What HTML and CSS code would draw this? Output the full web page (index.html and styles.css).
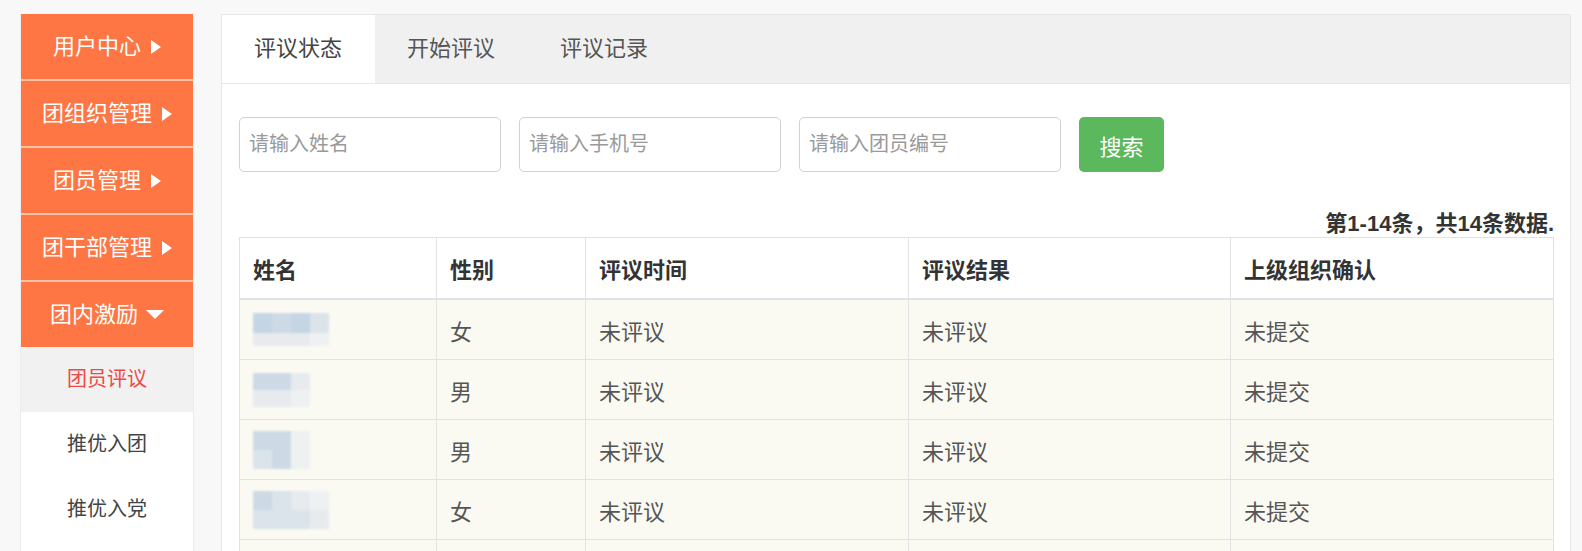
FILE: index.html
```html
<!DOCTYPE html>
<html lang="zh-CN">
<head>
    <meta charset="UTF-8">
    <meta name="viewport" content="width=device-width, initial-scale=1.0">
    <title>团员评议</title>
    <link rel="stylesheet" href="styles.css">
</head>
<body>

<div class="page">
    <!-- left menu -->
    <div class="sidebar">
        <ul class="menu">
            <li class="menu-item"><a href="#">用户中心<span class="arrow-right"></span></a></li>
            <li class="menu-item"><a href="#">团组织管理<span class="arrow-right"></span></a></li>
            <li class="menu-item"><a href="#">团员管理<span class="arrow-right"></span></a></li>
            <li class="menu-item"><a href="#">团干部管理<span class="arrow-right"></span></a></li>
            <li class="menu-item open"><a href="#">团内激励<span class="arrow-down"></span></a></li>
        </ul>
        <ul class="submenu">
            <li class="active"><a href="#">团员评议</a></li>
            <li><a href="#">推优入团</a></li>
            <li><a href="#">推优入党</a></li>
        </ul>
    </div>

    <!-- main panel -->
    <div class="panel">
        <ul class="tabs">
            <li class="active"><a href="#">评议状态</a></li>
            <li><a href="#">开始评议</a></li>
            <li><a href="#">评议记录</a></li>
        </ul>

        <div class="panel-body">
            <form class="search-form">
                <input type="text" placeholder="请输入姓名">
                <input type="text" placeholder="请输入手机号">
                <input type="text" placeholder="请输入团员编号">
                <button type="button" class="btn-search">搜索</button>
            </form>

            <div class="summary">第<b>1-14</b>条，共<b>14</b>条数据.</div>

            <table class="grid">
                <thead>
                    <tr>
                        <th>姓名</th>
                        <th>性别</th>
                        <th>评议时间</th>
                        <th>评议结果</th>
                        <th>上级组织确认</th>
                    </tr>
                </thead>
                <tbody>
                    <tr>
                        <td>
                            <div class="mosaic cols4 tall1">
                                <span class="m1"></span><span class="m2"></span><span class="m1"></span><span class="m3"></span>
                                <span class="m4"></span><span class="m4"></span><span class="m4"></span><span class="m5"></span>
                            </div>
                        </td>
                        <td>女</td>
                        <td>未评议</td>
                        <td>未评议</td>
                        <td>未提交</td>
                    </tr>
                    <tr>
                        <td>
                            <div class="mosaic cols3">
                                <span class="m2"></span><span class="m2"></span><span class="m4"></span>
                                <span class="m4"></span><span class="m4"></span><span class="m5"></span>
                            </div>
                        </td>
                        <td>男</td>
                        <td>未评议</td>
                        <td>未评议</td>
                        <td>未提交</td>
                    </tr>
                    <tr>
                        <td>
                            <div class="mosaic cols3 tall">
                                <span class="m2"></span><span class="m2"></span><span class="m5"></span>
                                <span class="m3"></span><span class="m2"></span><span class="m5"></span>
                            </div>
                        </td>
                        <td>男</td>
                        <td>未评议</td>
                        <td>未评议</td>
                        <td>未提交</td>
                    </tr>
                    <tr>
                        <td>
                            <div class="mosaic cols4 tall">
                                <span class="m2"></span><span class="m3"></span><span class="m4"></span><span class="m5"></span>
                                <span class="m3"></span><span class="m3"></span><span class="m3"></span><span class="m4"></span>
                            </div>
                        </td>
                        <td>女</td>
                        <td>未评议</td>
                        <td>未评议</td>
                        <td>未提交</td>
                    </tr>
                    <tr>
                        <td></td>
                        <td></td>
                        <td></td>
                        <td></td>
                        <td></td>
                    </tr>
                </tbody>
            </table>
        </div>
    </div>
</div>

</body>
</html>
```

FILE: styles.css
```css
html, body {
    margin: 0;
    padding: 0;
    overflow: hidden;
}
body {
    font-family: "Liberation Sans", "Noto Sans CJK SC", sans-serif;
    font-size: 22px;
    color: #333;
    background-color: #f8f8f8;
}
ul {
    list-style: none;
    margin: 0;
    padding: 0;
}
a {
    text-decoration: none;
    color: inherit;
}

.page {
    display: flex;
    align-items: flex-start;
    gap: 27px;
    padding: 14px 11px 0 20px;
}

/* ---- sidebar ---- */
.sidebar {
    width: 172px;
    flex-shrink: 0;
    height: 620px;
    background-color: #fff;
    border: 1px solid #ececec;
    border-top: 0;
}
.menu-item {
    background-color: #fd7643;
    border-bottom: 2px solid #fcc2a8;
}
.menu-item:last-child {
    border-bottom: 0;
}
.menu-item a {
    display: flex;
    align-items: center;
    justify-content: center;
    height: 65px;
    color: #fff;
    line-height: 30px;
}
.arrow-right {
    display: inline-block;
    width: 0;
    height: 0;
    margin-left: 10px;
    border-top: 7px solid transparent;
    border-bottom: 7px solid transparent;
    border-left: 10px solid #fff;
}
.arrow-down {
    display: inline-block;
    width: 0;
    height: 0;
    margin-left: 8px;
    border-left: 9px solid transparent;
    border-right: 9px solid transparent;
    border-top: 9px solid #fff;
}
.submenu li a {
    display: block;
    height: 65px;
    line-height: 65px;
    text-align: center;
    font-size: 20px;
    color: #444;
}
.submenu li.active a {
    background-color: #f1f1f1;
    color: #ee4a45;
}

/* ---- main panel ---- */
.panel {
    flex: 1;
    height: 640px;
    background-color: #fff;
    border: 1px solid #e6e6e6;
}
.tabs {
    display: flex;
    height: 68px;
    background-color: #f0f0f0;
    border-bottom: 1px solid #e8e8e8;
}
.tabs li a {
    display: block;
    padding: 0 33px 0 32px;
    line-height: 68px;
    color: #555;
}
.tabs li.active a {
    background-color: #fff;
    color: #444;
}

.panel-body {
    padding: 33px 16px 0 17px;
}
.search-form {
    display: flex;
    gap: 18px;
}
.search-form input {
    width: 262px;
    height: 55px;
    box-sizing: border-box;
    padding: 0 9px;
    border: 1px solid #d2d2d2;
    border-radius: 5px;
    font-family: inherit;
    font-size: 20px;
    color: #333;
}
.search-form input::placeholder {
    color: #9a9a9a;
}
.btn-search {
    width: 85px;
    height: 55px;
    border: 0;
    border-radius: 5px;
    background-color: #5cb85c;
    color: #fff;
    font-family: inherit;
    font-size: 22px;
    cursor: pointer;
}

.summary {
    margin-top: 38px;
    line-height: 27px;
    text-align: right;
    font-weight: bold;
    color: #333;
}

/* ---- table ---- */
.grid {
    width: 100%;
    border-collapse: collapse;
    border: 1px solid #e2e2e2;
}
.grid th, .grid td {
    border: 1px solid #e2e2e2;
    text-align: left;
    padding: 0 13px;
}
.grid th {
    height: 60px;
    background-color: #fff;
    border-bottom: 2px solid #e2e2e2;
    font-weight: bold;
}
.grid td {
    height: 59px;
    background-color: #fafaf3;
    color: #555;
}
.grid th:nth-child(1) { width: 170px; }
.grid th:nth-child(2) { width: 122px; }
.grid th:nth-child(3) { width: 296px; }
.grid th:nth-child(4) { width: 295px; }

/* blurred names */
.mosaic {
    display: grid;
    grid-auto-rows: 17px;
    filter: blur(1.2px);
    opacity: 0.95;
}
.mosaic.tall {
    grid-auto-rows: 19px;
}
.mosaic.tall1 {
    grid-template-rows: 20px 13px;
}
.mosaic.cols3 {
    grid-template-columns: repeat(3, 19px);
}
.mosaic.cols4 {
    grid-template-columns: repeat(4, 19px);
}
.m1 { background-color: #c2d4e4; }
.m2 { background-color: #cbd9e5; }
.m3 { background-color: #d9e3ea; }
.m4 { background-color: #e6ebee; }
.m5 { background-color: #eef1f1; }
```
